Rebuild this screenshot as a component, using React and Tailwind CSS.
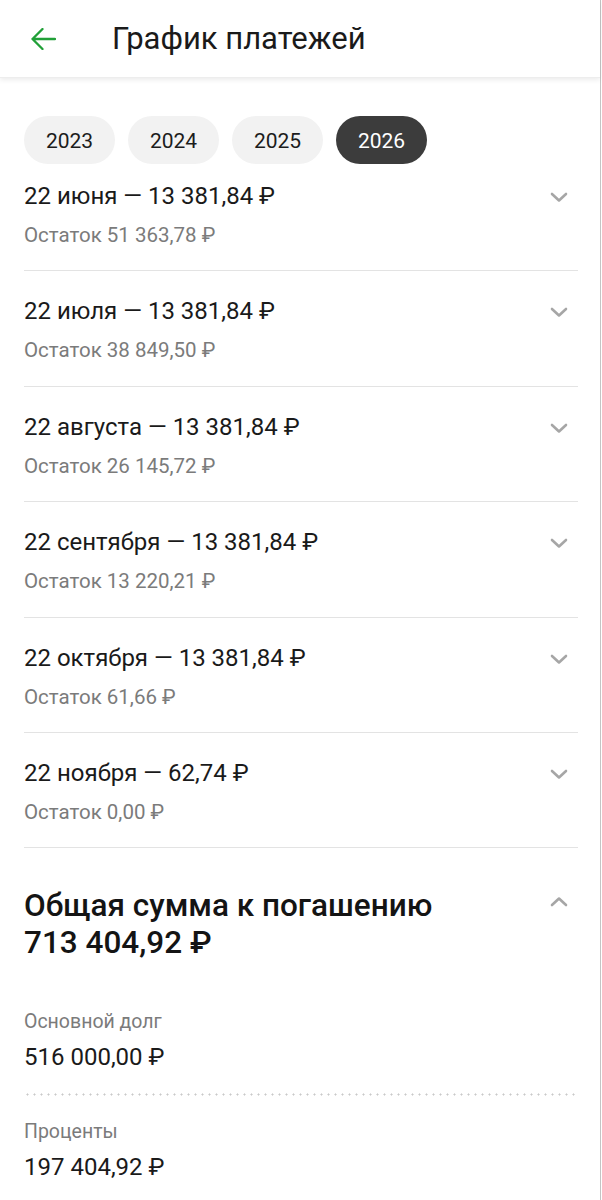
import { useState } from "react";

const payments = [
  { date: "22 июня", amount: "13 381,84 ₽", rest: "51 363,78 ₽" },
  { date: "22 июля", amount: "13 381,84 ₽", rest: "38 849,50 ₽" },
  { date: "22 августа", amount: "13 381,84 ₽", rest: "26 145,72 ₽" },
  { date: "22 сентября", amount: "13 381,84 ₽", rest: "13 220,21 ₽" },
  { date: "22 октября", amount: "13 381,84 ₽", rest: "61,66 ₽" },
  { date: "22 ноября", amount: "62,74 ₽", rest: "0,00 ₽" },
];

const years = ["2023", "2024", "2025", "2026"];

const Chevron = ({ up }) => (
  <svg
    width="18"
    height="12"
    viewBox="0 0 18 12"
    fill="none"
    className={up ? "rotate-180" : ""}
  >
    <path
      d="M2 3l7 6.5L16 3"
      stroke="#a6a6a6"
      strokeWidth="2.6"
      strokeLinecap="round"
      strokeLinejoin="round"
    />
  </svg>
);

const PaymentRow = ({ p, idx }) => (
  <div
    className={`flex justify-between border-b border-[#e3e3e3] ${
      idx === 0 ? "pt-[18px]" : "pt-[26px]"
    } ${idx === 1 || idx === 3 ? "pb-[24px]" : "pb-[23px]"}`}
  >
    <div className="flex flex-col gap-[13px]">
      <p className="text-[24px] leading-[28px] text-[#1a1a1a]">
        {p.date} — {p.amount}
      </p>
      <p className="text-[20.5px] leading-[24px] text-[#7b7b7b]">
        Остаток {p.rest}
      </p>
    </div>
    <div className="pt-[9px] pr-[10px]">
      <Chevron />
    </div>
  </div>
);

const App = () => {
  const [year, setYear] = useState("2026");
  return (
    <div
      className="w-[601px] min-h-[1200px] bg-white border-r border-[#c4c4c4]"
      style={{ fontFamily: "Roboto, 'Liberation Sans', sans-serif" }}
    >
      <div className="h-[78px] flex items-center shadow-[0_2px_5px_rgba(0,0,0,0.08)] border-b border-[#ededed]">
        <div className="w-[112px] pl-[31px] pt-[1px]">
          <svg width="25" height="22" viewBox="0 0 25 22" fill="none">
            <path
              d="M24 11H1.5M11.5 1L1.5 11l10 10"
              stroke="#21a038"
              strokeWidth="2.3"
              strokeLinecap="round"
              strokeLinejoin="round"
            />
          </svg>
        </div>
        <h1 className="text-[31px] leading-[36px] text-[#1a1a1a]">
          График платежей
        </h1>
      </div>

      <div className="px-[24px]">
        <div className="flex gap-[13px] mt-[38px]">
          {years.map((y) => (
            <button
              key={y}
              onClick={() => setYear(y)}
              className={`w-[91px] h-[48px] pt-[3px] rounded-full text-[21px] ${
                y === year
                  ? "bg-[#3c3c3c] text-white"
                  : "bg-[#f2f2f2] text-[#1c1c1c]"
              }`}
            >
              {y}
            </button>
          ))}
        </div>

        <div className="w-[554px]">
          {payments.map((p, idx) => (
            <PaymentRow key={p.date} p={p} idx={idx} />
          ))}
        </div>

        <div className="flex justify-between pt-[40px] w-[554px]">
          <div>
            <p className="text-[31.5px] leading-[36px] font-medium text-[#141414]">
              Общая сумма к погашению
            </p>
            <p className="text-[31.5px] leading-[38px] font-medium text-[#141414]">
              713 404,92 ₽
            </p>
          </div>
          <div className="pt-[8px] pr-[10px]">
            <Chevron up />
          </div>
        </div>

        <div className="mt-[48px] w-[554px]">
          <p className="text-[19.5px] leading-[24px] text-[#7b7b7b]">
            Основной долг
          </p>
          <p className="mt-[9px] text-[24px] leading-[28px] text-[#1a1a1a]">
            516 000,00 ₽
          </p>
          <div className="mt-[22px] h-[3px] bg-[radial-gradient(circle,#c9c9c9_0.8px,transparent_1.3px)] bg-[length:7px_3px]" />
          <p className="mt-[24px] text-[19.5px] leading-[24px] text-[#7b7b7b]">
            Проценты
          </p>
          <p className="mt-[9px] text-[24px] leading-[28px] text-[#1a1a1a]">
            197 404,92 ₽
          </p>
        </div>
      </div>
    </div>
  );
};

export default App;
